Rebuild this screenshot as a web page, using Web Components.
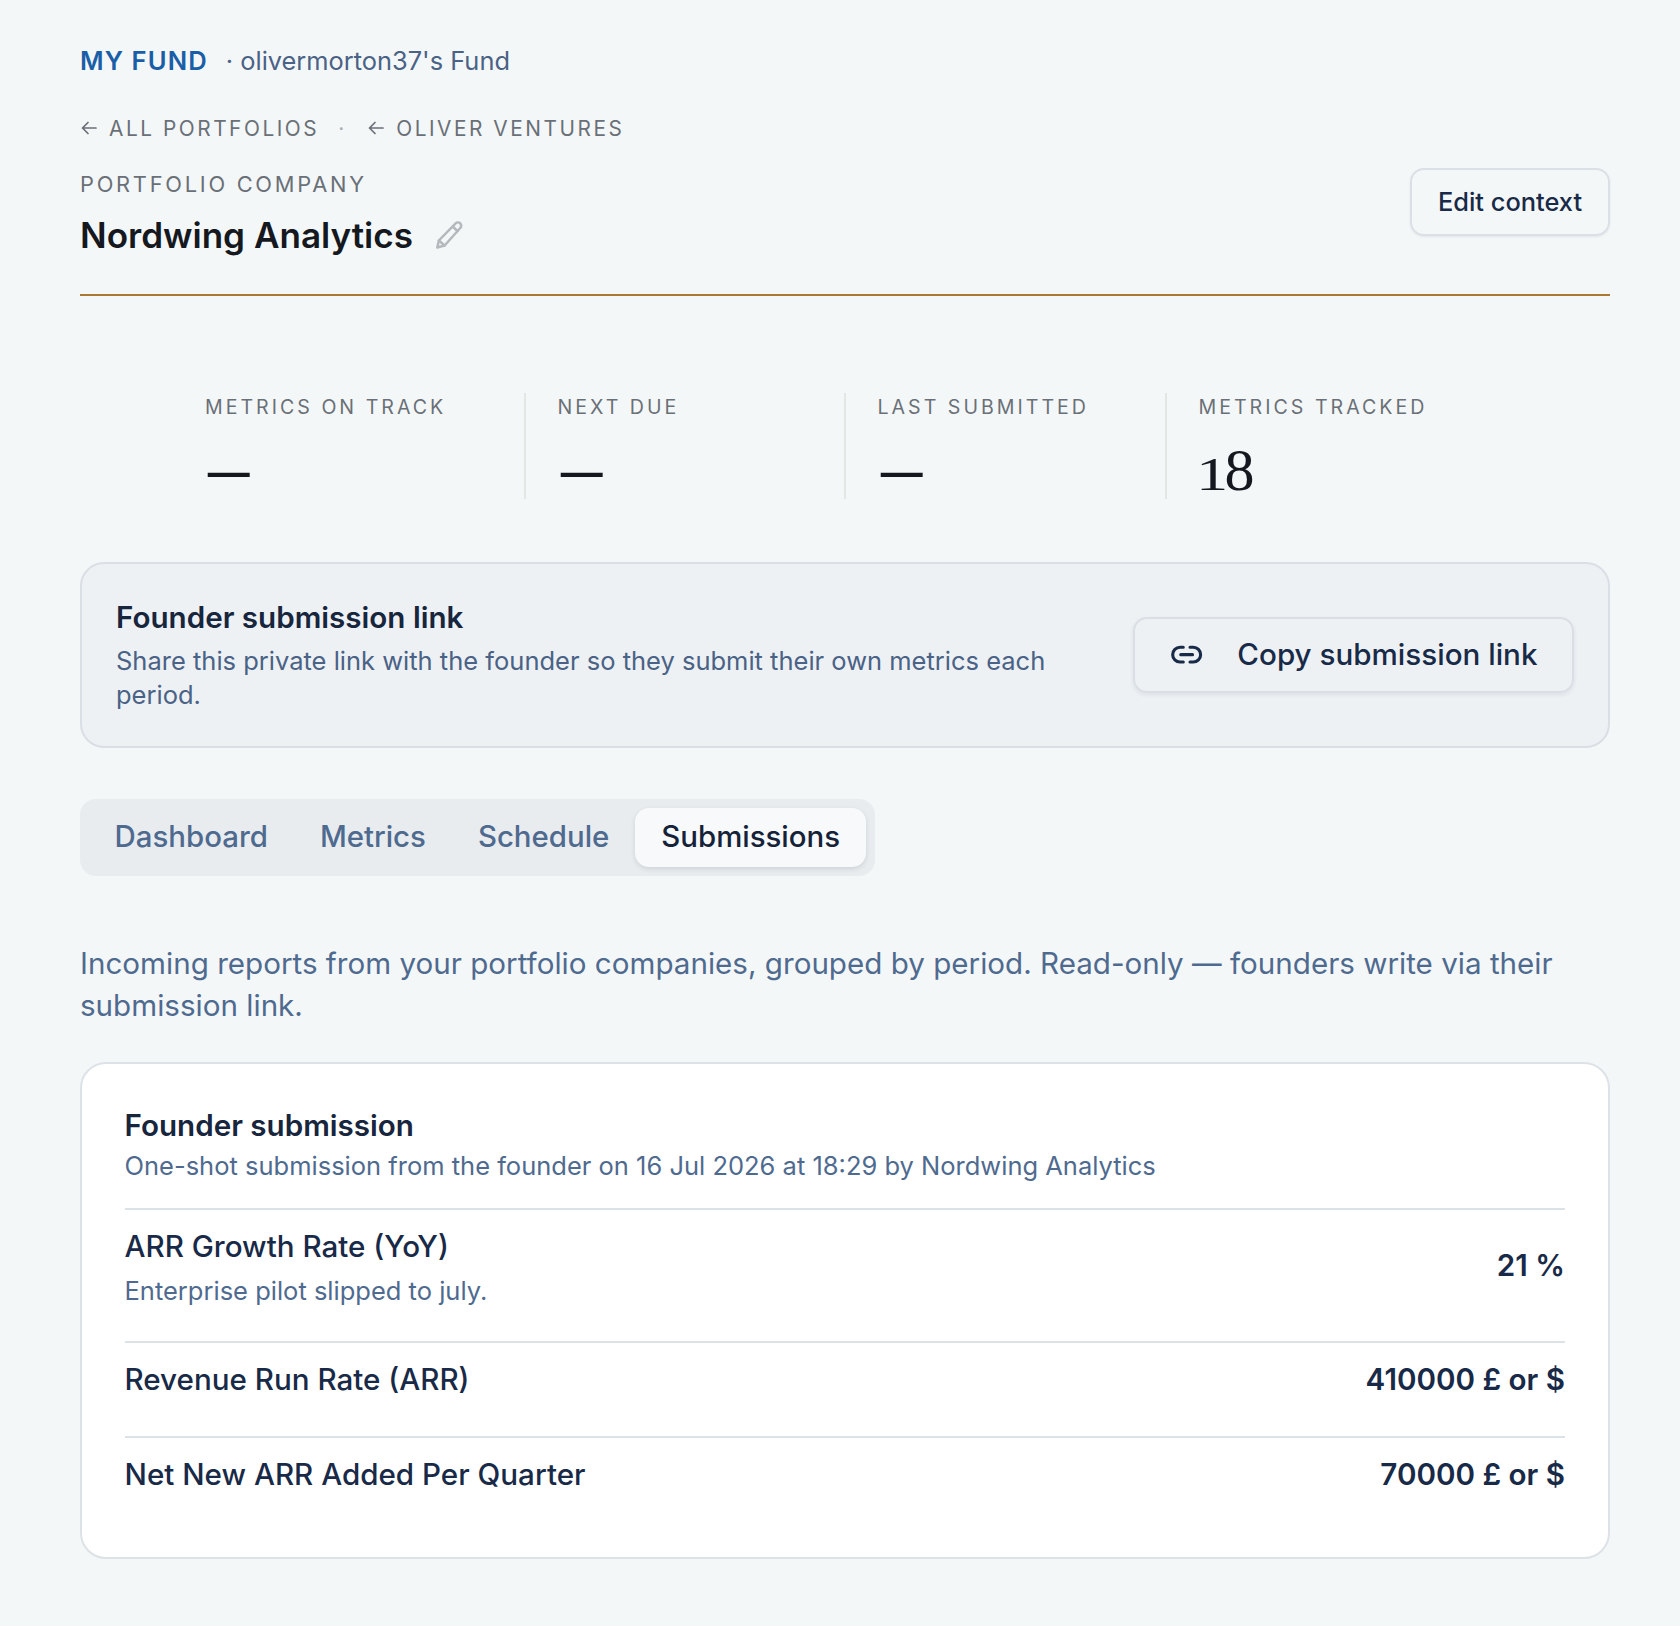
<!DOCTYPE html>
<html><head><meta charset="utf-8"><style>
html,body{margin:0;padding:0;background:#f4f7f8;}
body{font-family:Inter,"Noto Sans",sans-serif;color:#152238;-webkit-font-smoothing:antialiased}
</style></head><body>
<app-page>
  <fund-line name="MY FUND" owner="· olivermorton37's Fund"></fund-line>
  <crumb-bar><crumb-link>ALL PORTFOLIOS</crumb-link><crumb-link>OLIVER VENTURES</crumb-link></crumb-bar>
  <company-head eyebrow="PORTFOLIO COMPANY" title-text="Nordwing Analytics"></company-head>
  <stat-strip>
    <stat-item label="METRICS ON TRACK" value="—"></stat-item>
    <stat-item label="NEXT DUE" value="—"></stat-item>
    <stat-item label="LAST SUBMITTED" value="—"></stat-item>
    <stat-item label="METRICS TRACKED" value="18"></stat-item>
  </stat-strip>
  <link-card></link-card>
  <tab-bar active="Submissions"></tab-bar>
  <intro-text>Incoming reports from your portfolio companies, grouped by period. Read-only — founders write via their submission link.</intro-text>
  <submission-card heading="Founder submission" sub="One-shot submission from the founder on 16 Jul 2026 at 18:29 by Nordwing Analytics">
    <metric-row name="ARR Growth Rate (YoY)" note="Enterprise pilot slipped to july." value="21 %" variant="first"></metric-row>
    <metric-row name="Revenue Run Rate (ARR)" value="410000 £ or $"></metric-row>
    <metric-row name="Net New ARR Added Per Quarter" value="70000 £ or $"></metric-row>
  </submission-card>
</app-page>
<script>
function def(name,html){
  customElements.define(name,class extends HTMLElement{
    connectedCallback(){
      if(this.shadowRoot)return;
      const s=this.attachShadow({mode:'open'});
      s.innerHTML=typeof html==='function'?html(this):html;
    }
  });
}
const a=(e,n)=>e.getAttribute(n)||'';
def('app-page',`<style>:host{display:block;box-sizing:border-box;width:1680px;min-height:1626px;padding:40px 70px 68px 80px}</style><slot></slot>`);
def('fund-line',e=>`<style>:host{display:flex;align-items:baseline;height:42px;line-height:42px;white-space:nowrap}
.n{font-size:25.6px;font-weight:600;letter-spacing:1.1px;color:#1a5ea8;margin-right:18px}
.o{font-size:25.4px;color:#4a6285}</style><span class="n">${a(e,'name')}</span><span class="o">${a(e,'owner')}</span>`);
def('crumb-bar',`<style>:host{display:flex;align-items:center;margin-top:25px;height:42px}</style><slot></slot>`);
def('crumb-link',`<style>:host{display:inline-flex;align-items:center;font-size:20.8px;letter-spacing:2.55px;color:#6a7077;white-space:nowrap}
:host(:not(:first-child)){margin-left:48px;position:relative}
:host(:not(:first-child))::before{content:"·";position:absolute;left:-29px;color:#a8aeb5;letter-spacing:0}
svg{width:18px;height:18px;margin-right:11px;flex:none}</style>
<svg viewBox="0 0 18 18" fill="none" stroke="#6a7077" stroke-width="1.7" stroke-linecap="round" stroke-linejoin="round"><path d="M16 9H2.5M8 3.5 2.5 9 8 14.5"/></svg><slot></slot>`);
def('company-head',e=>`<style>:host{display:flex;justify-content:space-between;align-items:flex-start;margin-top:21px;height:124px;border-bottom:2px solid #a87a32}
.e{font-size:21.8px;letter-spacing:2.75px;color:#6a7077;line-height:28px}
.t{display:flex;align-items:center;font-size:35.1px;font-weight:600;color:#15191f;margin-top:13px;line-height:48px}
svg{width:30px;height:30px;margin-left:21px;flex:none}
button{all:unset;box-sizing:border-box;width:200px;height:68px;margin-top:-2px;padding-bottom:1px;border:2px solid #dbe0e6;border-radius:14px;font-size:25.4px;font-weight:500;color:#182a47;text-align:center;box-shadow:0 1px 2px rgba(20,30,50,.08)}</style>
<div><div class="e">${a(e,'eyebrow')}</div><div class="t">${a(e,'title-text')}<svg viewBox="0 0 24 24" fill="none" stroke="#b5b8bc" stroke-width="2" stroke-linejoin="round" stroke-linecap="round"><path d="M17.3 2.7a2.6 2.6 0 0 1 3.7 3.7L8.5 20.4 2.6 22l1.3-5.6L17.3 2.7Z"/><path d="M15 5.2l3.8 3.7M3.9 16.4l4.6 4"/></svg></div></div>
<button>Edit context</button>`);
def('stat-strip',`<style>:host{display:grid;grid-template-columns:321px 320px 321px 350px;grid-template-rows:106px;margin:97px 0 0 125px;height:106px}</style><slot></slot>`);
def('stat-item',e=>{
  const v=a(e,'value');
  const val=v==='—'?`<span class="dash">—</span>`:`<span class="one">${v[0]}</span>${v.slice(1)}`;
  return `<style>:host{display:block;box-sizing:border-box;padding-left:31.5px;border-right:2px solid #e3e6e2}
:host(:last-child){border-right:0}:host(:first-child){padding-left:0}
.l{font-size:19.6px;letter-spacing:3px;color:#6a7077;line-height:28px;white-space:nowrap}
.v{font-family:"Liberation Serif",serif;font-size:60px;color:#15191f;line-height:56px;margin-top:21px;white-space:nowrap}
.dash{display:inline-block;font-weight:700;transform-origin:0 50%;transform:translate(3px,-1px) scaleX(.69)}
.one{display:inline-block;width:24px;font-size:46px;margin-left:2px;transform-origin:0 100%;transform:translateX(-5px) scaleX(1.4)}</style>
<div class="l">${a(e,'label')}</div><div class="v">${val}</div>`;});
def('link-card',`<style>:host{display:flex;align-items:center;justify-content:space-between;box-sizing:border-box;height:186px;margin-top:63px;padding:0 34px;border:2px solid #d9dfe5;border-radius:24px;background:#edf1f4}
.c{padding-bottom:1px}
h3{margin:0 0 7px;font-size:29.6px;font-weight:600;color:#17253d;line-height:40px}
p{margin:0;font-size:25.5px;color:#4a6285;line-height:34px;width:960px}
button{all:unset;box-sizing:border-box;display:flex;align-items:center;width:441px;height:76px;padding:0 0 2px 34px;border:2px solid #d9dfe5;border-radius:14px;font-size:29.6px;font-weight:500;color:#182a47;box-shadow:0 2px 4px rgba(20,30,50,.07);white-space:nowrap}
svg{width:35.3px;height:35.3px;margin:2px 33px 0 0;flex:none}</style>
<div class="c"><h3>Founder submission link</h3><p>Share this private link with the founder so they submit their own metrics each period.</p></div>
<button><svg viewBox="0 0 24 24" fill="none" stroke="#182a47" stroke-width="2.1" stroke-linecap="round" stroke-linejoin="round"><path d="M9.7 7H7.5a5 5 0 0 0 0 10h2.2M14.3 7h2.2a5 5 0 0 1 0 10h-2.2M8 12h8"/></svg>Copy submission link</button>`);
def('tab-bar',e=>`<style>:host{display:inline-flex;box-sizing:border-box;height:77px;margin-top:51px;padding:9px 8.6px;border-radius:16px;background:#e8ecef;vertical-align:top}
span{display:flex;align-items:center;box-sizing:border-box;height:59px;padding:0 26px 3px;font-size:29.4px;font-weight:500;color:#4f6a8f;border-radius:14px;white-space:nowrap}
.a{background:#f7f9fb;color:#152238;box-shadow:0 2px 5px rgba(20,30,50,.12)}</style>
${['Dashboard','Metrics','Schedule','Submissions'].map(t=>`<span class="${t===a(e,'active')?'a':''}">${t}</span>`).join('')}`);
def('intro-text',`<style>:host{display:block;margin-top:66px;font-size:29.6px;line-height:42px;color:#4f6a8f}</style><slot></slot>`);
def('submission-card',e=>`<style>:host{display:block;box-sizing:border-box;height:497px;margin-top:36px;padding:42px 43px 0 42.5px;background:#fff;border:2px solid #dde2e7;border-radius:26px}
h3{margin:0 0 1px;font-size:29.6px;font-weight:600;color:#17253d;line-height:39px}
p{margin:0;font-size:25.5px;color:#4f6a8f;line-height:40px}
.h{padding-bottom:22px}</style>
<div class="h"><h3>${a(e,'heading')}</h3><p>${a(e,'sub')}</p></div><slot></slot>`);
def('metric-row',e=>`<style>:host{display:flex;justify-content:space-between;align-items:center;box-sizing:border-box;border-top:2px solid #dde2e7;height:95px;padding-bottom:22px;color:#182a47}
:host([variant=first]){height:133px;padding-bottom:18px}
:host([variant=first]) .v{margin-bottom:4px}
.n{font-size:29.6px;font-weight:500;line-height:40px}
.s{font-size:25.5px;color:#4f6a8f;line-height:34px;margin-top:8px}
.v{font-size:29.6px;font-weight:600}</style>
<div><div class="n">${a(e,'name')}</div>${a(e,'note')?`<div class="s">${a(e,'note')}</div>`:''}</div><div class="v">${a(e,'value')}</div>`);
</script>
</body></html>
